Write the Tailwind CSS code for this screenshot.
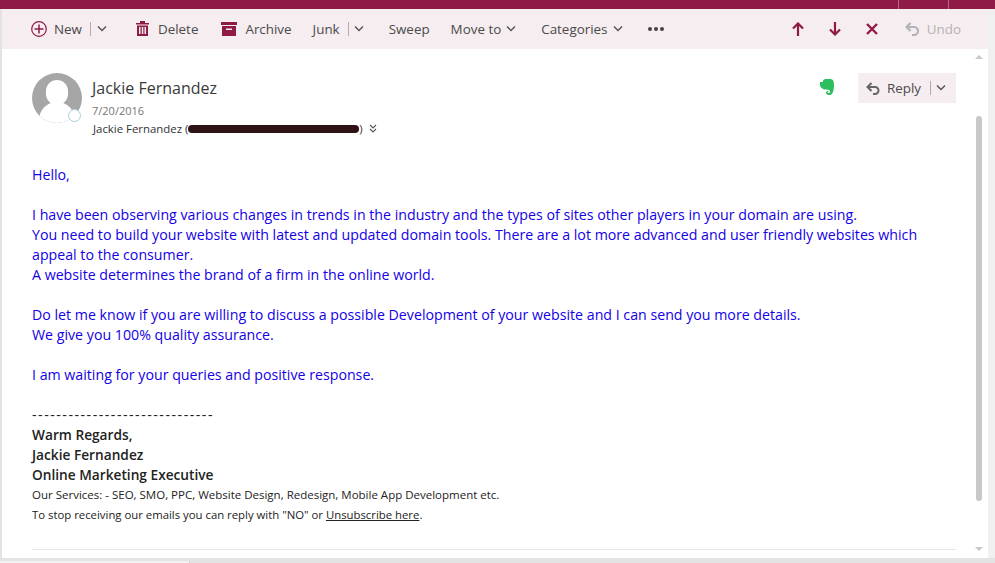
<!DOCTYPE html>
<html>
	<head>
		<meta charset="UTF-8" />
		<title>Mail</title>
		<script src="https://cdn.jsdelivr.net/npm/@tailwindcss/browser@4"></script>
	</head>

	<body class="h-[563px] w-[995px] overflow-hidden bg-white font-['Open_Sans',sans-serif] text-[#333333]">
		<!-- top bar -->
		<div class="flex h-[9px] justify-end bg-[#8f1a46]">
			<div class="h-full w-[51px] border-x border-[#b5688a]"></div>
			<div class="w-[46px]"></div>
		</div>

		<div class="flex h-[549px]">
			<div class="w-0.5 shrink-0 bg-[#e3e3e3]"></div>

			<div class="flex min-w-0 flex-1 flex-col">
				<!-- command bar -->
				<div class="flex h-10 shrink-0 items-center bg-[#f5edf0] text-[13.4px] text-[#4a4a4a]">
					<div class="ml-[29px] flex items-center">
						<svg class="h-4 w-4" viewBox="0 0 16 16" fill="none" stroke="#8f1a46" stroke-width="1.2"><circle cx="8" cy="8" r="7.300"/><path d="M8 3.500v9M3.500 8h9" stroke-width="1.500"/></svg>
						<span class="ml-[7px]">New</span>
						<span class="ml-2 h-[14px] w-px bg-[#b9a9ae]"></span>
						<svg class="ml-[6px] h-[8px] w-[10px]" viewBox="0 0 10 8" fill="none" stroke="#555" stroke-width="1.4"><path d="M1 1.500 5 5.500l4-4"/></svg>
					</div>
					<div class="ml-[29px] flex items-center">
						<svg class="h-[15px] w-[13px]" viewBox="0 0 13 15" fill="#8f1a46"><path d="M4 0h5v2h4v1.500H0V2h4zM1 4.500h11V15H1zM3 6v7h1.500V6zm2.800 0v7h1.500V6zm2.700 0v7H10V6z" fill-rule="evenodd"/></svg>
						<span class="ml-[9px]">Delete</span>
					</div>
					<div class="ml-[23px] flex items-center">
						<svg class="h-[14px] w-4" viewBox="0 0 16 14" fill="#8f1a46"><path d="M0 0h16v3H0zM1 4h14v10H1zM5 6.500v1.500h6V6.500z" fill-rule="evenodd"/></svg>
						<span class="ml-2">Archive</span>
					</div>
					<div class="ml-[21px] flex items-center">
						<span>Junk</span>
						<span class="ml-2 h-[14px] w-px bg-[#b9a9ae]"></span>
						<svg class="ml-[5px] h-[8px] w-[10px]" viewBox="0 0 10 8" fill="none" stroke="#555" stroke-width="1.4"><path d="M1 1.500 5 5.500l4-4"/></svg>
					</div>
					<span class="ml-[25px]">Sweep</span>
					<div class="ml-[21px] flex items-center">
						<span>Move to</span>
						<svg class="ml-[5px] h-[8px] w-[10px]" viewBox="0 0 10 8" fill="none" stroke="#555" stroke-width="1.4"><path d="M1 1.500 5 5.500l4-4"/></svg>
					</div>
					<div class="ml-[25px] flex items-center">
						<span>Categories</span>
						<svg class="ml-[6px] h-[8px] w-[10px]" viewBox="0 0 10 8" fill="none" stroke="#555" stroke-width="1.4"><path d="M1 1.500 5 5.500l4-4"/></svg>
					</div>
					<div class="ml-[25px] flex gap-[2px]">
						<span class="h-1 w-1 rounded-full bg-[#444]"></span>
						<span class="h-1 w-1 rounded-full bg-[#444]"></span>
						<span class="h-1 w-1 rounded-full bg-[#444]"></span>
					</div>
					<div class="ml-auto flex items-center">
						<svg class="h-[14px] w-3" viewBox="0 0 12 14" fill="none" stroke="#8f1a46" stroke-width="2.200"><path d="M6 14V1.500M1 6.500l5-5 5 5"/></svg>
						<svg class="ml-[25px] h-[14px] w-3" viewBox="0 0 12 14" fill="none" stroke="#8f1a46" stroke-width="2.200"><path d="M6 0v12.500M1 7.500l5 5 5-5"/></svg>
						<svg class="ml-[25px] h-3 w-3" viewBox="0 0 12 12" fill="none" stroke="#8f1a46" stroke-width="2.400"><path d="M1 1l10 10M11 1 1 11"/></svg>
						<svg class="ml-[27px] h-[14px] w-[14px]" viewBox="0 0 14 14" fill="none" stroke="#b3b3b3" stroke-width="2.200"><path d="M5.500 1 1.500 5l4 4M1.500 5H9a3.800 3.800 0 0 1 0 8H7"/></svg>
						<span class="mr-[27px] ml-2 text-[#b3b3b3]">Undo</span>
					</div>
					<div class="h-full w-[7px] bg-[#f0f0f0]"></div>
				</div>

				<div class="flex min-h-0 flex-1">
					<!-- reading pane -->
					<div class="min-w-0 flex-1 pl-[30px] pt-6">
						<div class="flex items-start">
							<div class="relative h-[50px] w-[50px] shrink-0 overflow-hidden rounded-full bg-[#a6a6a6]">
								<div class="absolute left-[14px] top-[7px] h-[25px] w-[22px] rounded-full bg-white"></div>
								<div class="absolute left-[7px] top-[29px] h-[30px] w-[36px] rounded-t-[18px] bg-white"></div>
							</div>
							<div class="relative -ml-[14px] mt-[36px] h-[13px] w-[13px] shrink-0 rounded-full border border-[#a9cfdc] bg-white"></div>
							<div class="ml-[11px] flex-1">
								<p class="mt-1 text-[16px] leading-[22px] text-[#3a3a3a]">Jackie Fernandez</p>
								<p class="mt-1 text-[11px] leading-[15px] text-[#767676]">7/20/2016</p>
								<div class="mt-[3px] flex items-center text-[11.4px] leading-[15px] text-[#333333]">
									<span class="ml-px">Jackie Fernandez (</span>
									<span class="h-2 w-[171px] rounded-full bg-[#2f1215]"></span>
									<span>)</span>
									<svg class="ml-[6px] h-[10px] w-2" viewBox="0 0 8 10" fill="none" stroke="#555" stroke-width="1.100"><path d="M1 1l3 3 3-3M1 5l3 3 3-3"/></svg>
								</div>
							</div>
							<svg class="mt-[6px] mr-[24px] h-[16px] w-[14px] shrink-0" viewBox="0 0 14 16" fill="#2dbe60"><path d="M3 1.500 5 0h5c3 0 4 2 4 6 0 5-1 9-3.500 10H8.500C7 16 6 15 6 13.500c0-1 1-1.500 2-1.500 .5 0 .5 1-.5 1 0 1.500 2.500 1.500 2.500-.5C10 11 8 10.500 6 10.500 3 10.500 0 9 0 5.500V3h3z"/></svg>
							<div class="mr-[15px] flex h-[30px] w-[98px] shrink-0 items-center bg-[#f5edf0] pl-2 text-[13.4px] text-[#4a4a4a]">
								<svg class="h-[13px] w-[14px]" viewBox="0 0 14 13" fill="none" stroke="#666" stroke-width="2"><path d="M5.500 1 1.500 5l4 4M1.500 5H9a3.500 3.500 0 0 1 0 7H7"/></svg>
								<span class="ml-[7px]">Reply</span>
								<span class="ml-[9px] h-[14px] w-px bg-[#a9a9b5]"></span>
								<svg class="ml-[5px] h-[8px] w-[10px]" viewBox="0 0 10 8" fill="none" stroke="#555" stroke-width="1.400"><path d="M1 1.500 5 5.500l4-4"/></svg>
							</div>
						</div>

						<!-- message -->
						<div class="mt-[29px] mr-[30px] text-[14.2px] leading-5">
							<div class="text-[#1400e6]">
								<p>Hello,</p>
								<p class="mt-5">I have been observing various changes in trends in the industry and the types of sites other players in your domain are using.</p>
								<p>You need to build your website with latest and updated domain tools. There are a lot more advanced and user friendly websites which appeal to the consumer.</p>
								<p>A website determines the brand of a firm in the online world.</p>
								<p class="mt-5">Do let me know if you are willing to discuss a possible Development of your website and I can send you more details.</p>
								<p>We give you 100% quality assurance.</p>
								<p class="mt-5">I am waiting for your queries and positive response.</p>
							</div>
							<p class="mt-5 tracking-[1.5px] text-[#222222]">------------------------------</p>
							<p class="text-[13.7px] font-semibold text-[#222222]">Warm Regards,</p>
							<p class="text-[13.7px] font-semibold text-[#222222]">Jackie Fernandez</p>
							<p class="text-[13.7px] font-semibold text-[#222222]">Online Marketing Executive</p>
							<p class="text-[11.5px] text-[#222222]">Our Services: - SEO, SMO, PPC, Website Design, Redesign, Mobile App Development etc.</p>
							<p class="text-[11.35px] text-[#222222]">To stop receiving our emails you can reply with "NO" or <a class="underline" href="#">Unsubscribe here</a>.</p>
						</div>
						<div class="mt-6 mr-[15px] border-t border-[#e6e6e6]"></div>
					</div>

					<!-- scrollbar -->
					<div class="relative flex w-[24px] shrink-0">
						<div class="relative w-[17px]">
							<span class="absolute left-[4px] top-[6px] h-0 w-0 border-x-[4px] border-b-[4px] border-x-transparent border-b-[#c8c8c8]"></span>
							<span class="absolute left-[5px] top-[67px] h-[385px] w-[6px] rounded-full bg-[#c8c8c8]"></span>
							<span class="absolute left-[4px] bottom-[7px] h-0 w-0 border-x-[4px] border-t-[4px] border-x-transparent border-t-[#c8c8c8]"></span>
						</div>
						<div class="w-[7px] bg-[#f0f0f0]"></div>
					</div>
				</div>
			</div>
		</div>

		<!-- bottom edge -->
		<div class="h-[5px] bg-[#e3e3e3] pt-[3px]">
			<div class="h-[2px] w-[190px] border-r border-[#cfcfcf] bg-[#f2f2f2]"></div>
		</div>
	</body>
</html>
